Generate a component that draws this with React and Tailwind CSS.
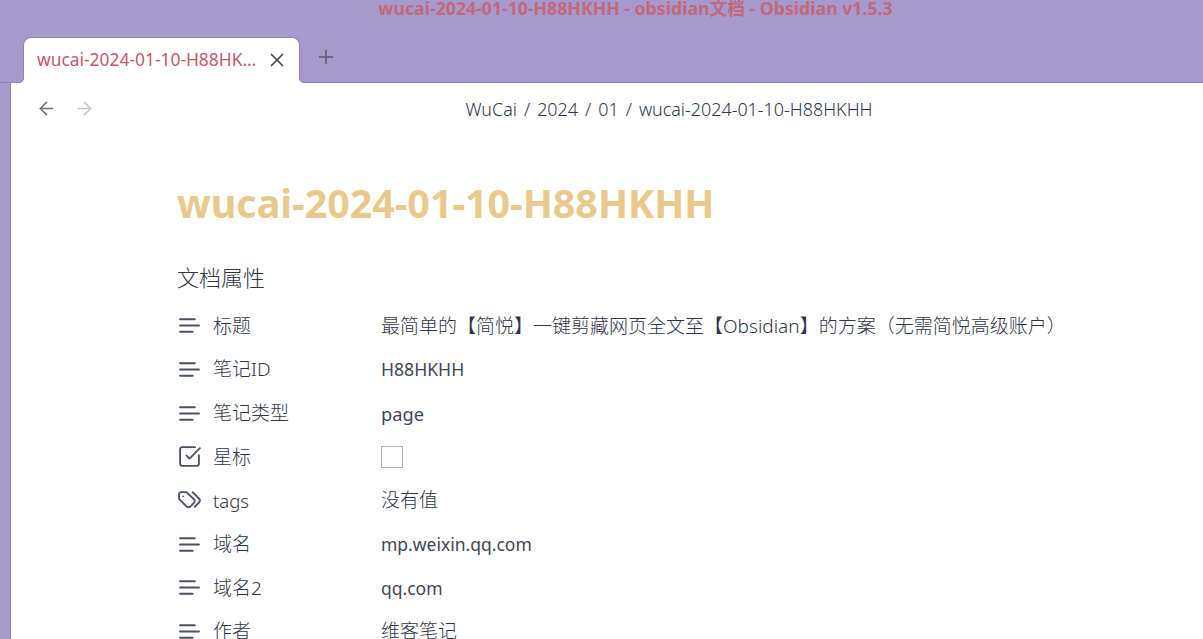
import React from 'react';
import { ArrowLeft, ArrowRight, X, Plus, SquareCheckBig } from 'lucide-react';

const fontStack = 'font-["Noto_Sans","Noto_Sans_CJK_SC",sans-serif]';

const rows = [
  { icon: 'text', name: '标题', valueCls: 'text-[19px] font-light text-[#2f3547]', value: '最简单的【简悦】一键剪藏网页全文至【Obsidian】的方案（无需简悦高级账户）' },
  { icon: 'text', name: '笔记ID', valueCls: 'text-[17.6px] text-[#3f4557]', value: 'H88HKHH' },
  { icon: 'text', name: '笔记类型', valueCls: 'text-[18.3px] text-[#3f4557]', value: 'page' },
  { icon: 'check', name: '星标', checkbox: true },
  { icon: 'tags', name: 'tags', value: '没有值', valueCls: 'text-[19px] font-light text-[#2f3547]' },
  { icon: 'text', name: '域名', valueCls: 'text-[17.5px] text-[#3f4557]', value: 'mp.weixin.qq.com' },
  { icon: 'text', name: '域名2', valueCls: 'text-[17.5px] text-[#3f4557]', value: 'qq.com' },
  { icon: 'text', name: '作者', valueCls: 'text-[19px] font-light text-[#2f3547]', value: '维客笔记' },
];

const PropIcon = ({ type }) => {
  const cls = 'w-[25px] h-[25px] text-[#4b5163]';
  if (type === 'check') return <SquareCheckBig className={cls} strokeWidth={1.8} />;
  if (type === 'tags') {
    return (
      <svg viewBox="0 0 24 24" fill="none" stroke="currentColor" strokeWidth={1.8} strokeLinecap="round" strokeLinejoin="round" className={cls}>
        <path d="M9 4H4a2 2 0 0 0-2 2v4.5l7.3 7.3c.94.94 2.48.94 3.42 0l3.58-3.58c.94-.94.94-2.48 0-3.42L9 4Z" />
        <path d="M6 8.01V8" />
        <path d="m15 4 6.3 6.3a2.4 2.4 0 0 1 0 3.4L17 18" />
      </svg>
    );
  }
  return (
    <svg viewBox="0 0 24 24" fill="none" stroke="currentColor" strokeWidth={2} strokeLinecap="round" className={cls}>
      <path d="M3 6h14" />
      <path d="M3 12h18" />
      <path d="M3 18h12" />
    </svg>
  );
};

const Flare = ({ side }) => (
  <svg
    width="6"
    height="6"
    viewBox="0 0 6 6"
    className={`absolute bottom-0 ${side === 'left' ? '-left-[6px]' : '-right-[6px]'}`}
  >
    <path d={side === 'left' ? 'M0 6 Q6 6 6 0 L6 6 Z' : 'M6 6 Q0 6 0 0 L0 6 Z'} fill="#ffffff" />
    <path d={side === 'left' ? 'M0 5.5 Q5.5 5.5 5.5 0' : 'M6 5.5 Q0.5 5.5 0.5 0'} fill="none" stroke="#8f83b4" />
  </svg>
);

const App = () => {
  return (
    <div className={`h-screen w-full overflow-hidden bg-[#a699cb] flex flex-col ${fontStack}`}>
      <div className="h-[18px] flex items-center justify-center text-[17.7px] font-bold leading-none text-[#c4687b] pl-[68px]">
        wucai-2024-01-10-H88HKHH - obsidian文档 - Obsidian v1.5.3
      </div>

      <div className="h-[65px] flex items-end pl-[23px] border-b border-[#8f83b4]">
        <div className="relative -mb-px w-[277px] h-[46px] bg-white rounded-t-[8px] flex items-center pl-[13px] pr-[11px] border border-b-0 border-[#8f83b4]">
          <Flare side="left" />
          <Flare side="right" />
          <span className="flex-1 min-w-0 truncate text-[17.4px] text-[#c05b6d] -mt-[2px]">wucai-2024-01-10-H88HKHH</span>
          <X className="ml-[4px] shrink-0 w-[22px] h-[22px] text-[#454b5c] -mt-[2px]" strokeWidth={1.9} />
        </div>
        <Plus className="ml-[15px] mb-[14px] w-[22px] h-[22px] text-[#565a73]" strokeWidth={1.7} />
      </div>

      <div className="flex-1 min-h-0 flex">
        <div className="w-[11px] shrink-0 border-r border-[#8f83b4]" />
        <div className="flex-1 bg-white overflow-hidden">
          <div className="h-[52px] flex items-center">
            <div className="flex items-center pl-[25px] gap-[17px] -mt-[2px]">
              <ArrowLeft className="w-[21px] h-[21px] text-[#6b7080]" strokeWidth={1.8} />
              <ArrowRight className="w-[21px] h-[21px] text-[#c3c5cd]" strokeWidth={1.8} />
            </div>
            <div className="flex-1 flex justify-center gap-[7px] text-[17.9px] font-light text-[#2f3547] pl-[40px]">
              <span>WuCai</span>
              <span>/</span>
              <span>2024</span>
              <span>/</span>
              <span>01</span>
              <span>/</span>
              <span>wucai-2024-01-10-H88HKHH</span>
            </div>
          </div>

          <div className="pl-[166px]">
            <h1 className="mt-[38px] text-[39.4px] leading-[60px] font-bold text-[#e9c98b] h-[60px]">
              wucai-2024-01-10-H88HKHH
            </h1>
            <div className="mt-[29px] text-[22px] leading-[30px] text-[#2f3547] font-light">文档属性</div>

            <div className="mt-[12px] flex flex-col">
              {rows.map((row) => (
                <div key={row.name} className="h-[43.7px] flex items-center shrink-0">
                  <div className="w-[36px] shrink-0 flex items-center">
                    <PropIcon type={row.icon} />
                  </div>
                  <div className={`w-[168px] shrink-0 font-light text-[#2f3547] ${row.name === 'tags' ? 'text-[18.5px]' : 'text-[19px]'}`}>{row.name}</div>
                  {row.checkbox ? (
                    <div className="w-[22px] h-[22px] border border-[#9db3ce]" />
                  ) : (
                    <div className={`whitespace-nowrap ${row.valueCls}`}>{row.value}</div>
                  )}
                </div>
              ))}
            </div>
          </div>
        </div>
      </div>
    </div>
  );
};

export default App;
